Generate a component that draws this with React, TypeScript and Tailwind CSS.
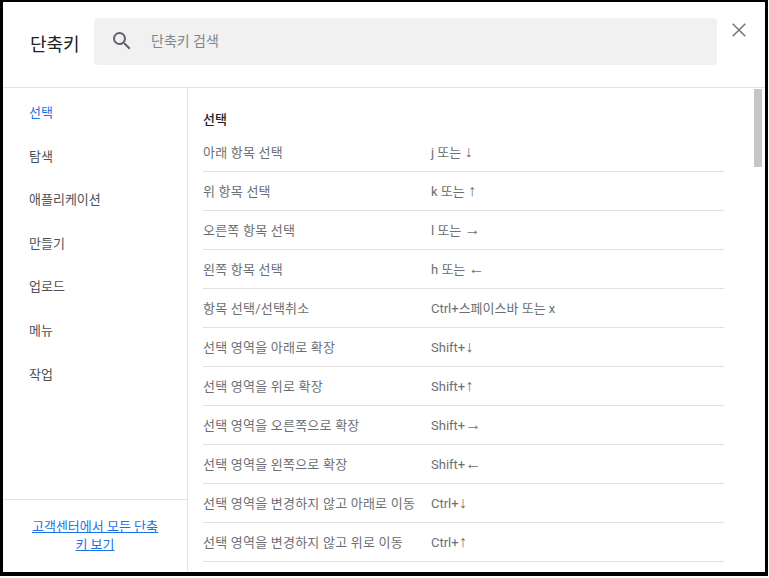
import React from "react";

const rows: [string, string, string][] = [
  ["아래 항목 선택", "j 또는 ", "↓"],
  ["위 항목 선택", "k 또는 ", "↑"],
  ["오른쪽 항목 선택", "l 또는 ", "→"],
  ["왼쪽 항목 선택", "h 또는 ", "←"],
  ["항목 선택/선택취소", "Ctrl+스페이스바 또는 x", ""],
  ["선택 영역을 아래로 확장", "Shift+", "↓"],
  ["선택 영역을 위로 확장", "Shift+", "↑"],
  ["선택 영역을 오른쪽으로 확장", "Shift+", "→"],
  ["선택 영역을 왼쪽으로 확장", "Shift+", "←"],
  ["선택 영역을 변경하지 않고 아래로 이동", "Ctrl+", "↓"],
  ["선택 영역을 변경하지 않고 위로 이동", "Ctrl+", "↑"],
];
const nav = ["선택", "탐색", "애플리케이션", "만들기", "업로드", "메뉴", "작업"];

export default function App() {
  return (
    <div className="w-[769px] h-[578px] bg-white overflow-hidden font-['Roboto','Liberation_Sans','Noto_Sans_CJK_KR',sans-serif]">
      <div className="w-[768px] h-[576px] border-t-2 border-b-[4px] border-l-[3px] border-r-[3px] border-black flex flex-col overflow-hidden">
        <header className="h-[86px] shrink-0 flex border-b border-[#e4e4e4] pl-[27px] pt-4 relative">
          <h1 className="w-[64px] mt-[15px] text-[18px] leading-[24px] text-[#202124] font-normal">단축키</h1>
          <div className="w-[623px] h-[47px] rounded bg-[#f1f1f1] flex items-center pl-[16px]">
            <svg viewBox="0 0 24 24" className="w-6 h-6 mt-[-1px]" fill="#5f6368">
              <path d="M15.5 14h-.79l-.28-.27A6.47 6.47 0 0 0 16 9.5 6.5 6.5 0 1 0 9.5 16c1.61 0 3.09-.59 4.23-1.57l.27.28v.79l5 4.99L20.49 19l-4.99-5zm-6 0C7.01 14 5 11.99 5 9.5S7.01 5 9.5 5 14 7.01 14 9.5 11.99 14 9.5 14z" />
            </svg>
            <span className="ml-[17px] text-[14px] text-[#80868b]">단축키 검색</span>
          </div>
          <button className="absolute left-[726px] top-[18px] w-[20px] h-[20px] flex items-center justify-center">
            <svg viewBox="0 0 14 14" className="w-[14px] h-[14px]" fill="none" stroke="#70757a" strokeWidth="1.5">
              <path d="M.7.7l12.6 12.6M13.3.7.7 13.3" />
            </svg>
          </button>
        </header>
        <div className="flex-1 min-h-0 flex">
          <aside className="w-[185px] shrink-0 border-r border-[#e4e4e4] flex flex-col">
            <nav className="flex-1 flex flex-col pl-[26px] pt-[15px] gap-[23.6px]">
              {nav.map((n, i) => (
                <div key={n} className={`text-[13px] leading-[20px] ${i === 0 ? "text-[#1a73e8]" : "text-[#4d5156]"}`}>{n}</div>
              ))}
            </nav>
            <div className="h-[73px] border-t border-[#e4e4e4] px-[28px] pt-[18px] text-center text-[13px] leading-[18px]">
              <a className="text-[#1a73e8] underline">고객센터에서 모든 단축키 보기</a>
            </div>
          </aside>
          <main className="flex-1 min-w-0 flex relative overflow-hidden">
            <div className="w-[521px] ml-[15px] pt-[22px]">
              <h2 className="text-[13px] leading-[20px] font-medium text-[#202124] mb-[3px]">선택</h2>
              {rows.map(([a, b, c]) => (
                <div key={a} className="h-[39px] border-b border-[#e0e0e0] pt-[1px] flex items-center text-[13px] text-[#6b6f73] shrink-0">
                  <div className="w-[228px] shrink-0 tracking-[0.22px] whitespace-nowrap">{a}</div>
                  <div className="whitespace-pre">{b}<span className="text-[16px] leading-none">{c}</span></div>
                </div>
              ))}
            </div>
            <div className="absolute left-[566px] top-[1px] w-2 h-[78px] bg-[#c6c6c6]" />
          </main>
        </div>
      </div>
    </div>
  );
}
